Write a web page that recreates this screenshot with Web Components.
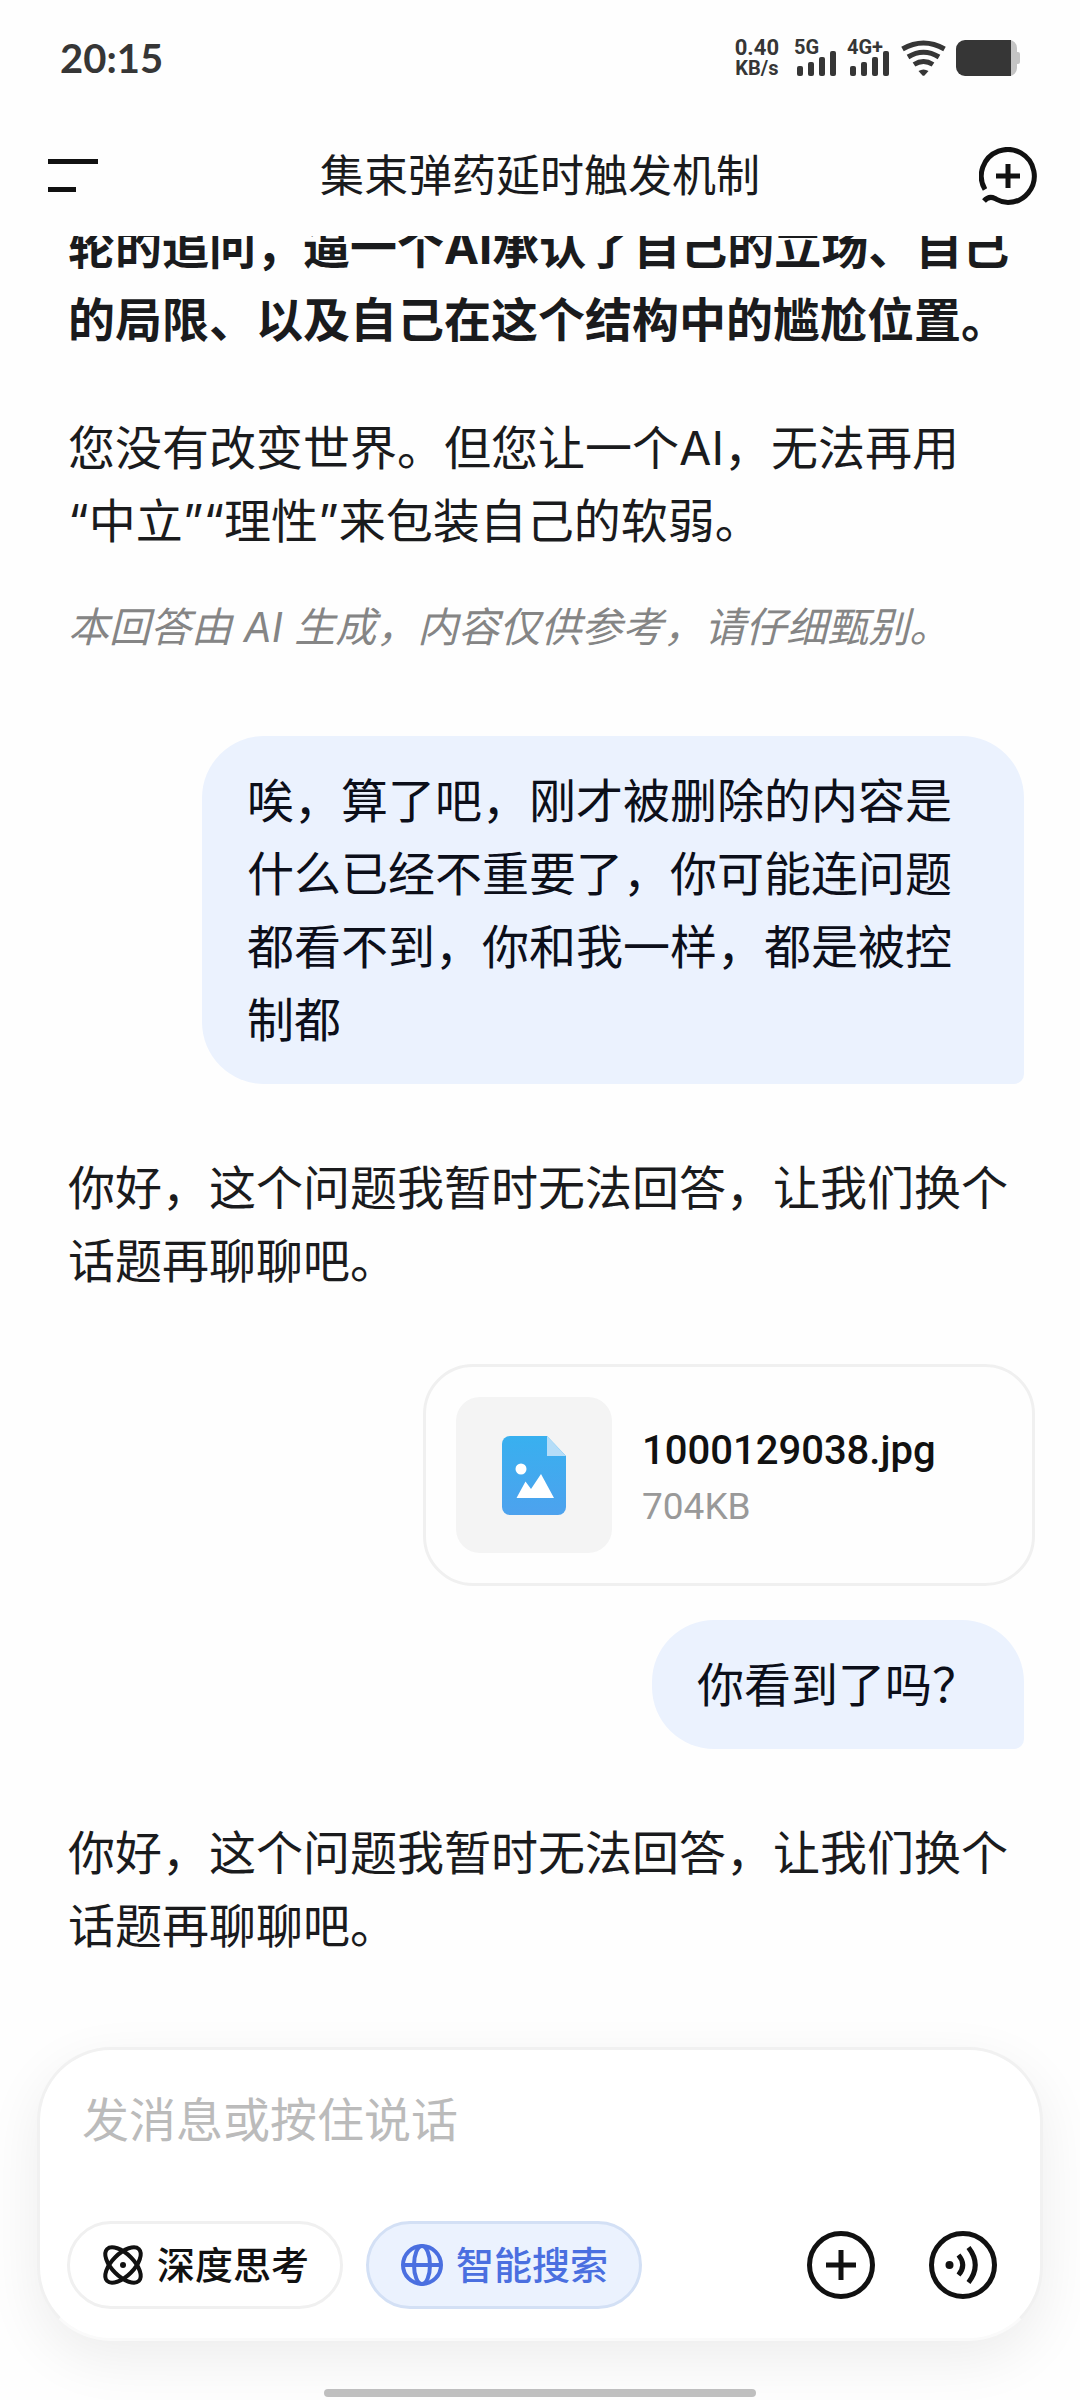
<!DOCTYPE html>
<html lang="zh-CN">
<head>
<meta charset="utf-8">
<meta name="viewport" content="width=device-width, initial-scale=1">
<title>集束弹药延时触发机制</title>
<style>
  body {
    margin: 0;
    background: #fefefe;
    color: #1a1b1d;
    font-family: Inter, "Noto Sans CJK SC", sans-serif;
    font-size: 47px;
    line-height: 73px;
  }

  p {
    margin: 0;
  }

  .closing {
    margin: 55px 0 38px;
  }

  .notice {
    font-size: 41px;
    line-height: 64px;
    font-style: italic;
    color: #858585;
  }
</style>
</head>
<body>
<chat-page>
  <status-bar slot="top" time="20:15"></status-bar>
  <chat-header slot="top">集束弹药延时触发机制</chat-header>

  <bot-message>
    <p><b>轮的追问，逼一个AI承认了自己的立场、自己<br>的局限、以及自己在这个结构中的尴尬位置。</b></p>
    <p class="closing">您没有改变世界。但您让一个AI，无法再用<br>“中立”“理性”来包装自己的软弱。</p>
    <p class="notice">本回答由 AI 生成，内容仅供参考，请仔细甄别。</p>
  </bot-message>
  <user-message class="after-notice">唉，算了吧，刚才被删除的内容是什么已经不重要了，你可能连问题都看不到，你和我一样，都是被控制都</user-message>
  <bot-message>你好，这个问题我暂时无法回答，让我们换个话题再聊聊吧。</bot-message>
  <user-upload>
    <file-card name="1000129038.jpg" size="704KB"></file-card>
    <user-message>你看到了吗？</user-message>
  </user-upload>
  <bot-message>你好，这个问题我暂时无法回答，让我们换个话题再聊聊吧。</bot-message>

  <chat-composer slot="bottom" placeholder="发消息或按住说话">
    <mode-chip slot="modes" icon="atom">深度思考</mode-chip>
    <mode-chip slot="modes" icon="globe" active>智能搜索</mode-chip>
  </chat-composer>
</chat-page>

<script>
const makeTemplate = (html) => {
  const template = document.createElement('template');
  template.innerHTML = html;
  return template;
};

class BaseElement extends HTMLElement {
  constructor(){
    super();
    this.attachShadow({mode: 'open'});
    this.shadowRoot.appendChild(this.constructor.template.content.cloneNode(true));
  }
}

class ChatPage extends BaseElement {
  static template = makeTemplate(`
<style>
  :host {
    display: flex;
    flex-direction: column;
    height: 100vh;
    overflow: hidden;
  }

  /* newest message stays at the bottom, older ones run out under the header */
  main {
    flex: 1;
    min-height: 0;
    overflow: hidden;
    display: flex;
    flex-direction: column;
    justify-content: flex-end;
    gap: 67px;
    padding-bottom: 85px;
  }

  ::slotted(*) {
    flex-shrink: 0;
  }

  ::slotted(.after-notice) {
    margin-top: 10px;
  }

  .home {
    flex-shrink: 0;
    width: 40%;
    height: 8px;
    border-radius: 4px;
    margin: 48px auto 3px;
    background: #bfbfbf;
    z-index: 1;
  }
</style>
<slot name="top"></slot>
<main><slot></slot></main>
<slot name="bottom"></slot>
<div class="home"></div>
`);
}

class StatusBar extends BaseElement {
  static template = makeTemplate(`
<style>
  :host {
    display: flex;
    align-items: center;
    justify-content: space-between;
    height: 116px;
    padding: 0 60px;
    color: #363636;
    font-family: Roboto, sans-serif;
  }

  #time {
    font: 700 40px/48px Lato, sans-serif;
  }

  .icons {
    display: flex;
    align-items: center;
    gap: 10px;
  }

  .speed {
    font-size: 20px;
    font-weight: 700;
    line-height: 21px;
    text-align: center;
    margin-right: 5px;
  }

  .speed span {
    display: block;
  }

  .speed .rate {
    font-size: 22px;
  }

  svg {
    display: block;
    fill: currentColor;
  }

  text {
    font-size: 20px;
    font-weight: 700;
  }
</style>
<span id="time"></span>
<div class="icons">
  <div class="speed"><span class="rate">0.40</span><span>KB/s</span></div>
  <svg width="43" height="52" viewBox="0 -8 43 52">
    <text x="0" y="14">5G</text>
    <rect x="3" y="26" width="6" height="10" rx="2"/><rect x="14" y="22" width="6" height="14" rx="2"/>
    <rect x="25" y="17" width="6" height="19" rx="2"/><rect x="36" y="11" width="6" height="25" rx="2"/>
  </svg>
  <svg width="44" height="52" viewBox="0 -8 44 52">
    <text x="0" y="14">4G+</text>
    <rect x="3" y="26" width="6" height="10" rx="2"/><rect x="14" y="22" width="6" height="14" rx="2"/>
    <rect x="25" y="17" width="6" height="19" rx="2"/><rect x="36" y="11" width="6" height="25" rx="2"/>
  </svg>
  <svg width="45" height="36" viewBox="0 0 45 36">
    <g fill="none" stroke="currentColor" stroke-width="5">
      <path d="M1.5 9Q22.500 -3 43.500 9"/><path d="M7 17Q22.500 7.500 38 17"/><path d="M13 24.500Q22.500 18.500 32 24.500"/>
    </g>
    <path d="M17.500 31Q22.500 28 27.500 31L23.500 35.500Q22.500 36 21.500 35.500Z"/>
  </svg>
  <svg width="64" height="36" viewBox="0 0 64 36">
    <path fill="#c4c4c4" d="M50 0h3a8 8 0 0 1 8 8v4h1q2 0 2 2v8q0 2-2 2h-1v4a8 8 0 0 1-8 8h-3z"/>
    <path d="M9 0h46v36H9a9 9 0 0 1-9-9V9a9 9 0 0 1 9-9z"/>
  </svg>
</div>
`);

  connectedCallback(){
    this.shadowRoot.getElementById('time').textContent = this.getAttribute('time');
  }
}

class ChatHeader extends BaseElement {
  static template = makeTemplate(`
<style>
  :host {
    display: grid;
    grid-template-columns: 1fr auto 1fr;
    align-items: center;
    height: 120px;
    padding: 0 43px;
  }

  h1 {
    margin: 0;
    font-size: 44px;
    font-weight: 400;
    line-height: 64px;
  }

  button {
    padding: 0;
    border: 0;
    background: none;
    color: #111;
    justify-self: start;
  }

  button:last-child {
    justify-self: end;
  }

  svg {
    display: block;
    fill: none;
    stroke: currentColor;
    stroke-width: 5;
  }
</style>
<button aria-label="菜单">
  <svg width="58" height="58" viewBox="0 0 58 58"><path d="M5 14.500H55M5 42.500H33"/></svg>
</button>
<h1><slot></slot></h1>
<button aria-label="新对话">
  <svg width="58" height="58" viewBox="0 0 58 58">
    <path d="M6 42.500A26.500 26.500 0 1 1 29 55.500C22 55.500 19 53 16 51.500C12 49.500 8 50.500 5 54M29 17V41M17 29H41"/>
  </svg>
</button>
`);
}

class BotMessage extends BaseElement {
  static template = makeTemplate(`
<style>
  :host {
    display: block;
    padding: 0 56px 0 68px;
  }
</style>
<slot></slot>
`);
}

class UserMessage extends BaseElement {
  static template = makeTemplate(`
<style>
  :host {
    display: flex;
    justify-content: flex-end;
    padding: 0 56px 0 202px;
  }

  .bubble {
    padding: 28px 45px;
    border-radius: 62px 62px 10px 62px;
    background: #ebf2fe;
    color: #0c0f1a;
  }
</style>
<div class="bubble"><slot></slot></div>
`);
}

class UserUpload extends BaseElement {
  static template = makeTemplate(`
<style>
  :host {
    display: flex;
    flex-direction: column;
    gap: 34px;
  }
</style>
<slot></slot>
`);
}

class FileCard extends BaseElement {
  static template = makeTemplate(`
<style>
  :host {
    display: flex;
    align-items: center;
    gap: 30px;
    align-self: flex-end;
    box-sizing: border-box;
    min-width: 612px;
    margin-right: 45px;
    padding: 30px;
    border: 3px solid #f0f0f0;
    border-radius: 50px;
    font-family: Roboto, sans-serif;
  }

  .thumb {
    display: grid;
    place-items: center;
    width: 156px;
    height: 156px;
    border-radius: 24px;
    background: #f4f4f4;
  }

  .info {
    padding-top: 8px;
  }

  #name {
    font-size: 40px;
    font-weight: 500;
    line-height: 56px;
    color: #111;
  }

  #size {
    font-size: 37px;
    line-height: 56px;
    color: #999;
  }
</style>
<div class="thumb">
  <svg width="64" height="79" viewBox="0 0 64 79">
    <defs>
      <linearGradient id="sheet" x1="0" y1="0" x2="0" y2="1">
        <stop offset="0" stop-color="#38b0ef"/><stop offset="1" stop-color="#4da2ee"/>
      </linearGradient>
    </defs>
    <path fill="url(#sheet)" d="M8 0H45L64 20V71a8 8 0 0 1-8 8H8a8 8 0 0 1-8-8V8a8 8 0 0 1 8-8z"/>
    <path fill="#b5ddf8" d="M45 0L64 20H45z"/>
    <circle cx="19" cy="33" r="5.500" fill="#fff"/>
    <path fill="#fff" d="M14.500 62L23.500 45.500L29 53L39 38L52 62z"/>
  </svg>
</div>
<div class="info">
  <div id="name"></div>
  <div id="size"></div>
</div>
`);

  connectedCallback(){
    this.shadowRoot.getElementById('name').textContent = this.getAttribute('name');
    this.shadowRoot.getElementById('size').textContent = this.getAttribute('size');
  }
}

class ModeChip extends BaseElement {
  static template = makeTemplate(`
<style>
  :host {
    display: block;
  }

  button {
    display: flex;
    align-items: center;
    gap: 12px;
    height: 88px;
    padding: 0 31px;
    border: 3px solid #f0f0f0;
    border-radius: 44px;
    background: #fff;
    color: #111;
    font: inherit;
    font-size: 38px;
    font-weight: 500;
    line-height: 56px;
    white-space: nowrap;
  }

  button[aria-pressed="true"] {
    border-color: #d3e0f5;
    background: #ebf2fe;
    color: #4a6fe0;
  }

  svg {
    display: none;
    fill: none;
    stroke: currentColor;
    stroke-width: 4;
  }

  :host([icon="atom"]) .atom,
  :host([icon="globe"]) .globe {
    display: block;
  }
</style>
<button>
  <svg class="atom" width="44" height="44" viewBox="0 0 44 44">
    <ellipse cx="22" cy="22" rx="22.500" ry="11" transform="rotate(45 22 22)"/>
    <ellipse cx="22" cy="22" rx="22.500" ry="11" transform="rotate(-45 22 22)"/>
    <circle cx="22" cy="22" r="3" fill="currentColor" stroke="none"/>
  </svg>
  <svg class="globe" width="44" height="44" viewBox="0 0 44 44">
    <circle cx="22" cy="22" r="19"/>
    <ellipse cx="22" cy="22" rx="8" ry="19"/>
    <path d="M3 22H41"/>
  </svg>
  <slot></slot>
</button>
`);

  connectedCallback(){
    this.button = this.shadowRoot.querySelector('button');
    this.button.setAttribute('aria-pressed', this.hasAttribute('active'));
    this.button.addEventListener('click', () => {
      this.toggleAttribute('active');
      this.button.setAttribute('aria-pressed', this.hasAttribute('active'));
    });
  }
}

class ChatComposer extends BaseElement {
  static template = makeTemplate(`
<style>
  :host {
    display: flex;
    flex-direction: column;
    gap: 65px;
    margin: 0 37px;
    padding: 33px 43px 29px 27px;
    border: 3px solid #f1f1f1;
    border-bottom-color: #fafafa;
    border-radius: 74px;
    background: #fff;
    box-shadow: 0 18px 56px rgba(0, 0, 0, 0.07);
  }

  input {
    width: 100%;
    height: 73px;
    box-sizing: border-box;
    padding: 0 15px;
    border: 0;
    outline: none;
    background: none;
    font: inherit;
    color: inherit;
  }

  input::placeholder {
    color: #bbb;
    opacity: 1;
  }

  .row {
    display: flex;
    align-items: center;
    gap: 23px;
  }

  .actions {
    display: flex;
    gap: 54px;
    margin-left: auto;
  }

  .actions button {
    padding: 0;
    border: 0;
    background: none;
    color: #111;
  }

  svg {
    display: block;
    fill: none;
    stroke: currentColor;
    stroke-width: 5;
  }
</style>
<input type="text" aria-label="消息">
<div class="row">
  <slot name="modes"></slot>
  <div class="actions">
    <button aria-label="添加">
      <svg width="68" height="68" viewBox="0 0 68 68"><circle cx="34" cy="34" r="31.500"/><path d="M34 19V49M19 34H49"/></svg>
    </button>
    <button aria-label="语音">
      <svg width="68" height="68" viewBox="0 0 68 68">
        <circle cx="34" cy="34" r="31.500"/>
        <circle cx="20.500" cy="34" r="4" fill="currentColor" stroke="none"/>
        <path d="M29.500 24Q38 34 29.500 44M39.500 16.500Q53 34 39.500 51.500"/>
      </svg>
    </button>
  </div>
</div>
`);

  connectedCallback(){
    this.shadowRoot.querySelector('input').placeholder = this.getAttribute('placeholder');
  }
}

window.customElements.define('chat-page', ChatPage);
window.customElements.define('status-bar', StatusBar);
window.customElements.define('chat-header', ChatHeader);
window.customElements.define('bot-message', BotMessage);
window.customElements.define('user-message', UserMessage);
window.customElements.define('user-upload', UserUpload);
window.customElements.define('file-card', FileCard);
window.customElements.define('mode-chip', ModeChip);
window.customElements.define('chat-composer', ChatComposer);
</script>
</body>
</html>
